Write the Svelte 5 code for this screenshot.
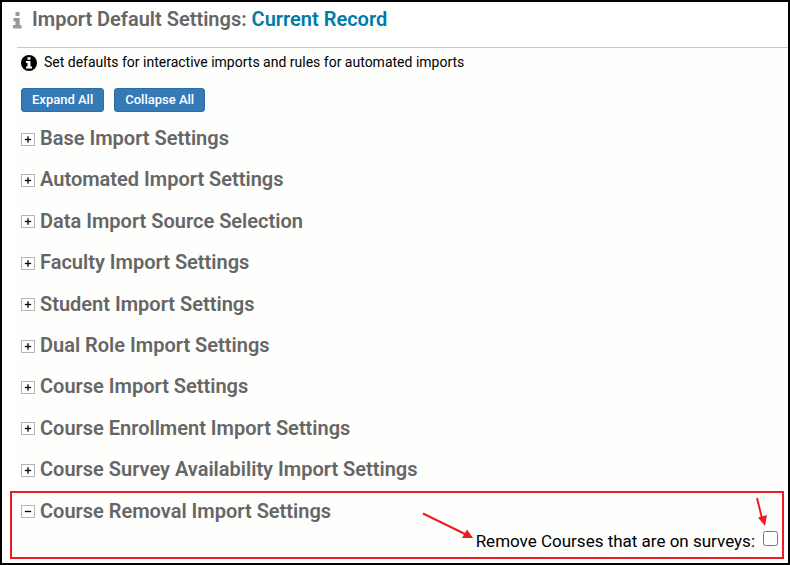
<script>
  const names = [
    'Base Import Settings',
    'Automated Import Settings',
    'Data Import Source Selection',
    'Faculty Import Settings',
    'Student Import Settings',
    'Dual Role Import Settings',
    'Course Import Settings',
    'Course Enrollment Import Settings',
    'Course Survey Availability Import Settings',
    'Course Removal Import Settings'
  ];
  let open = $state(names.map((_, i) => i === names.length - 1));
  let remove = $state(false);

  const setAll = (value) => (open = names.map(() => value));
  const toggle = (i) => (open[i] = !open[i]);
</script>

<main>
  <header>
    <svg class="title-icon" viewBox="0 0 10 18" width="10" height="18" aria-hidden="true">
      <path d="M3.500 1h4v4h-4zM1.500 7h6.200v7H9.500v3.500H1V14h2.500v-3.500h-2z" />
    </svg>
    <h1>Import Default Settings: <span>Current Record</span></h1>
  </header>

  <div class="body">
    <p class="intro">
      <svg viewBox="0 0 16 16" width="16" height="16" aria-hidden="true">
        <circle cx="8" cy="8" r="8" />
        <path fill="#fff" d="M6.500 2.200h3v2.600h-3zM5 6h4.500v5.500H11v2H5v-2h1.500V8H5z" />
      </svg>
      Set defaults for interactive imports and rules for automated imports
    </p>

    <div class="actions">
      <button type="button" onclick={() => setAll(true)}>Expand All</button>
      <button type="button" onclick={() => setAll(false)}>Collapse All</button>
    </div>

    <div class="sections">
      {#each names as name, i}
        <h2>
          <button type="button" aria-expanded={open[i]} onclick={() => toggle(i)}>
            <svg viewBox="0 0 14 13" width="14" height="13" aria-hidden="true">
              <rect x=".5" y=".5" width="13" height="12" fill="#fff" stroke="#b5b5b5" />
              <path d={open[i] ? 'M4 6h6v1H4z' : 'M4 6h6v1H4zM6.500 3.500h1v6h-1z'} stroke="#222" stroke-width=".4" />
            </svg>
            {name}
          </button>
        </h2>
      {/each}
    </div>

    {#if open[names.length - 1]}
      <div class="option">
        <label for="remove">Remove Courses that are on surveys:</label>
        <input id="remove" type="checkbox" bind:checked={remove} />
        <div class="callout" aria-hidden="true">
          <svg class="arrow long" viewBox="0 0 52 28" width="52" height="28">
            <path d="M1 1.500L43 22" stroke="#ed1c24" stroke-width="2" />
            <path d="M51 26H40l5-8.500z" fill="#ed1c24" />
          </svg>
          <svg class="arrow short" viewBox="0 0 14 30" width="14" height="30">
            <path d="M3 1l5 20" stroke="#ed1c24" stroke-width="2" />
            <path d="M11 29L4 20.500l9-2.500z" fill="#ed1c24" />
          </svg>
        </div>
      </div>
    {/if}
  </div>
</main>

<style>
  :global(body) {
    margin: 0;
  }
  main {
    box-sizing: border-box;
    min-height: 100vh;
    border: 2px solid #000;
    padding-left: 15px;
    background: #fff;
    color: #000;
    font-family: Roboto, "Liberation Sans", sans-serif;
  }
  header {
    display: flex;
    align-items: center;
    gap: 10px;
    height: 33px;
    margin-left: -5px;
    padding-bottom: 12px;
  }
  .title-icon {
    fill: #999;
    margin-top: 2px;
  }
  h1,
  h2 {
    margin: 0;
    font-size: 20px;
    font-weight: 600;
    line-height: 24px;
    color: #666;
  }
  h1 span {
    color: #007ba7;
  }
  .body {
    border-top: 1px solid #c8c8c8;
    background: #fefefc;
    padding: 4px;
  }
  .intro {
    display: flex;
    align-items: center;
    gap: 7px;
    margin: 0;
    height: 20px;
    font-size: 14px;
  }
  .intro svg {
    margin-top: 2px;
  }
  .actions {
    display: flex;
    gap: 10px;
    padding: 16px 0 6px;
  }
  .actions button {
    height: 24px;
    padding: 0 10px;
    border: 1px solid #2e6da4;
    border-radius: 3px;
    background: #337ab7;
    color: #fff;
    font: 500 13px/22px Roboto, sans-serif;
  }
  .sections {
    display: grid;
    grid-template-rows: repeat(10, 1fr);
    height: 414px;
  }
  h2 {
    padding-top: 8px;
  }
  h2 button {
    display: flex;
    align-items: center;
    gap: 5px;
    border: 0;
    padding: 0;
    background: none;
    color: inherit;
    font: inherit;
  }
  h2 svg {
    margin-top: 2px;
  }
  .option {
    position: relative;
    display: flex;
    justify-content: flex-end;
    align-items: center;
    gap: 8px;
    height: 20px;
    margin-top: -1px;
    padding-right: 6px;
    font-size: 17px;
  }
  input {
    width: 15px;
    height: 15px;
    margin: 0 0 5px;
  }
  .callout {
    position: absolute;
    inset: -40px 0 -8px -11px;
    border: 2px solid #ed1c24;
    pointer-events: none;
  }
  .arrow {
    position: absolute;
    fill: none;
  }
  .long {
    right: 308px;
    top: 19px;
  }
  .short {
    right: 14px;
    top: 4px;
  }
</style>
